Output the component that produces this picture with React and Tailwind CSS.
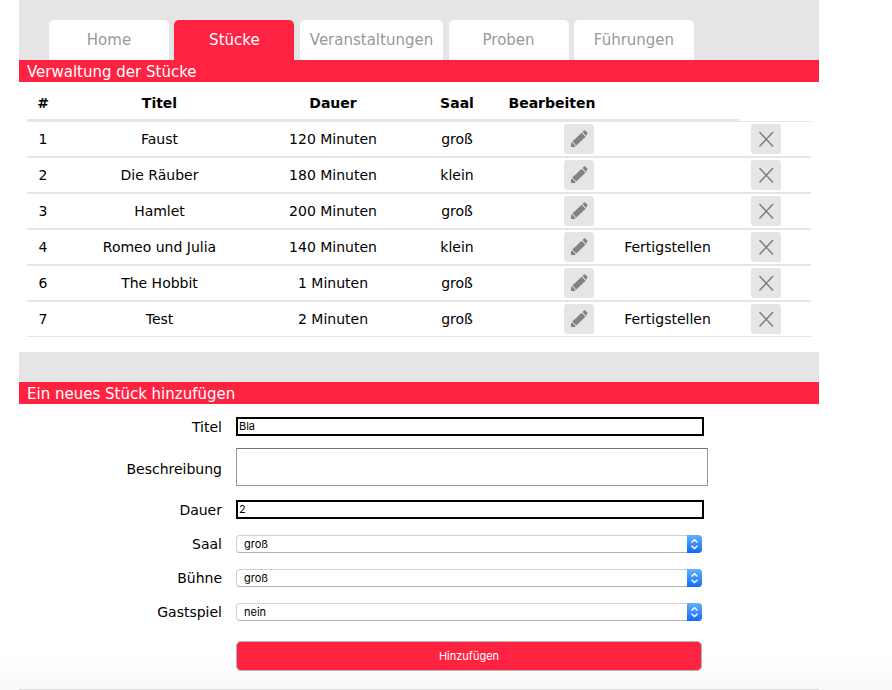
const tabs = ["Home", "Stücke", "Veranstaltungen", "Proben", "Führungen"];

const pieces = [
  { id: 1, title: "Faust", duration: "120 Minuten", hall: "groß", open: false },
  { id: 2, title: "Die Räuber", duration: "180 Minuten", hall: "klein", open: false },
  { id: 3, title: "Hamlet", duration: "200 Minuten", hall: "groß", open: false },
  { id: 4, title: "Romeo und Julia", duration: "140 Minuten", hall: "klein", open: true },
  { id: 6, title: "The Hobbit", duration: "1 Minuten", hall: "groß", open: false },
  { id: 7, title: "Test", duration: "2 Minuten", hall: "groß", open: true },
];

const controlFont = "font-['Inter','Liberation_Sans',sans-serif] text-[11px] text-black";

function PencilIcon() {
  return (
    <svg viewBox="0 0 30 30" className="size-[30px]" fill="#828282" aria-hidden="true">
      <path d="M7 23v-3.800l1.200-.8 3.400 3.500-.8 1.100z" />
      <path d="M8.300 17.600l9.400-8.800 3.900 3.900-9.300 8.700z" />
      <path d="M18.500 8l1.500-1.500q.6-.5 1.200 0l2 2q.6.600 0 1.200l-1 2.300z" />
    </svg>
  );
}

function CrossIcon() {
  return (
    <svg viewBox="0 0 30 30" className="size-[30px]" fill="none" stroke="#828282" strokeWidth="1.6" aria-hidden="true">
      <path d="M8.500 8l13.500 14.500M22 8L8.500 22.500" />
    </svg>
  );
}

function IconButton({ label, children }) {
  return (
    <button type="button" aria-label={label} className="block size-[30px] rounded-[3px] bg-[#e5e5e5]">
      {children}
    </button>
  );
}

function SectionTitle({ children }) {
  return <h2 className="h-[22px] bg-[#ff2342] px-2 text-[15px] leading-6 text-white">{children}</h2>;
}

function Field({ id, label, tall, children }) {
  return (
    <div className={`grid grid-cols-[203px_1fr] items-center gap-x-3.5 ${tall ? "h-[49px]" : "h-[34px]"}`}>
      <label htmlFor={id} className="text-right">{label}</label>
      <div>{children}</div>
    </div>
  );
}

function TextInput({ id, value }) {
  return (
    <div className="pb-0.5">
      <input
        id={id}
        type="text"
        defaultValue={value}
        className={`block h-[19px] w-full max-w-[468px] border-2 border-black bg-white px-px ${controlFont}`}
      />
    </div>
  );
}

function Select({ id, options }) {
  return (
    <div className="relative h-[18px] w-full max-w-[466px]">
      <select
        id={id}
        className={`block h-full w-full appearance-none rounded-[4px] border border-[#d0d0d0] border-b-[#b0b0b0] bg-white px-[7px] leading-4 ${controlFont}`}
      >
        {options.map((o) => (
          <option key={o}>{o}</option>
        ))}
      </select>
      <span className="pointer-events-none absolute inset-y-0 right-0 w-[15px] rounded-r-[4px] bg-linear-to-b from-[#62b0fb] to-[#0f68fb]">
        <svg viewBox="0 0 15 18" className="h-[18px] w-[15px]" fill="none" stroke="white" strokeWidth="1.4" aria-hidden="true">
          <path d="M4.500 7.500l3-2.800 3 2.800M4.500 10.700l3 2.800 3-2.800" />
        </svg>
      </span>
    </div>
  );
}

export default function App() {
  return (
    <div className="min-h-screen bg-linear-to-b from-white from-95% to-[#f8f8f8] pl-[19px] font-['DejaVu_Sans',sans-serif] text-sm text-black">
      <main className="w-full max-w-[800px]">
        <nav className="bg-[#e5e5e5] pt-5 pl-[30px]">
          <ul className="flex max-w-[645px] justify-between text-[15px]">
            {tabs.map((tab) => (
              <li key={tab}>
                <a
                  href="#"
                  className={`block h-10 min-w-[120px] rounded-t-[5px] px-2.5 text-center leading-10 ${
                    tab === "Stücke" ? "bg-[#ff2342] text-white" : "bg-white text-[#999999]"
                  }`}
                >
                  {tab}
                </a>
              </li>
            ))}
          </ul>
        </nav>

        <section>
          <SectionTitle>Verwaltung der Stücke</SectionTitle>
          <div className="px-2 pt-1 pb-[15px]">
            <table className="w-full table-fixed border-separate border-spacing-0 text-center">
              <colgroup>
                <col className="w-[32px]" />
                <col />
                <col className="w-[146px]" />
                <col className="w-[102px]" />
                <col className="w-[88px]" />
                <col className="w-[143px]" />
                <col className="w-[72px]" />
              </colgroup>
              <thead>
                <tr className="h-[35px]">
                  {["#", "Titel", "Dauer", "Saal", "Bearbeiten", ""].map((head) => (
                    <th key={head} className="border-b-2 border-[#e5e5e5] p-0 font-bold">{head}</th>
                  ))}
                </tr>
              </thead>
              <tbody>
                {pieces.map((p) => (
                  <tr key={p.id} className="h-9 *:border-y *:border-[#e5e5e5] *:p-0">
                    <td>{p.id}</td>
                    <td>{p.title}</td>
                    <td>{p.duration}</td>
                    <td>{p.hall}</td>
                    <td>
                      <div className="flex justify-end pr-0.5">
                        <IconButton label="Bearbeiten"><PencilIcon /></IconButton>
                      </div>
                    </td>
                    <td>{p.open && <a href="#">Fertigstellen</a>}</td>
                    <td>
                      <div className="flex pl-3">
                        <IconButton label="Löschen"><CrossIcon /></IconButton>
                      </div>
                    </td>
                  </tr>
                ))}
              </tbody>
            </table>
          </div>
        </section>

        <section className="border-t-[30px] border-[#e5e5e5]">
          <SectionTitle>Ein neues Stück hinzufügen</SectionTitle>
          <form className="pt-1.5">
            <Field id="titel" label="Titel"><TextInput id="titel" value="Bla" /></Field>
            <Field id="beschreibung" label="Beschreibung" tall>
              <div className="pb-[3px]">
                <textarea
                  id="beschreibung"
                  className={`block h-[38px] w-full max-w-[472px] resize-none border border-[#999999] border-t-[#707070] bg-white p-0.5 ${controlFont}`}
                />
              </div>
            </Field>
            <Field id="dauer" label="Dauer"><TextInput id="dauer" value="2" /></Field>
            <Field id="saal" label="Saal"><Select id="saal" options={["groß", "klein"]} /></Field>
            <Field id="buehne" label="Bühne"><Select id="buehne" options={["groß", "klein"]} /></Field>
            <Field id="gastspiel" label="Gastspiel"><Select id="gastspiel" options={["nein", "ja"]} /></Field>
            <div className="pt-3 pb-[18px] pl-[217px]">
              <button
                type="submit"
                className="block h-[30px] w-full max-w-[466px] rounded-[5px] border border-[#b5b5b5] bg-[#ff2342] pt-px font-['Inter','Liberation_Sans',sans-serif] text-[11px] text-white"
              >
                Hinzufügen
              </button>
            </div>
          </form>
        </section>
        <hr className="border-[#dddddd]" />
      </main>
    </div>
  );
}
